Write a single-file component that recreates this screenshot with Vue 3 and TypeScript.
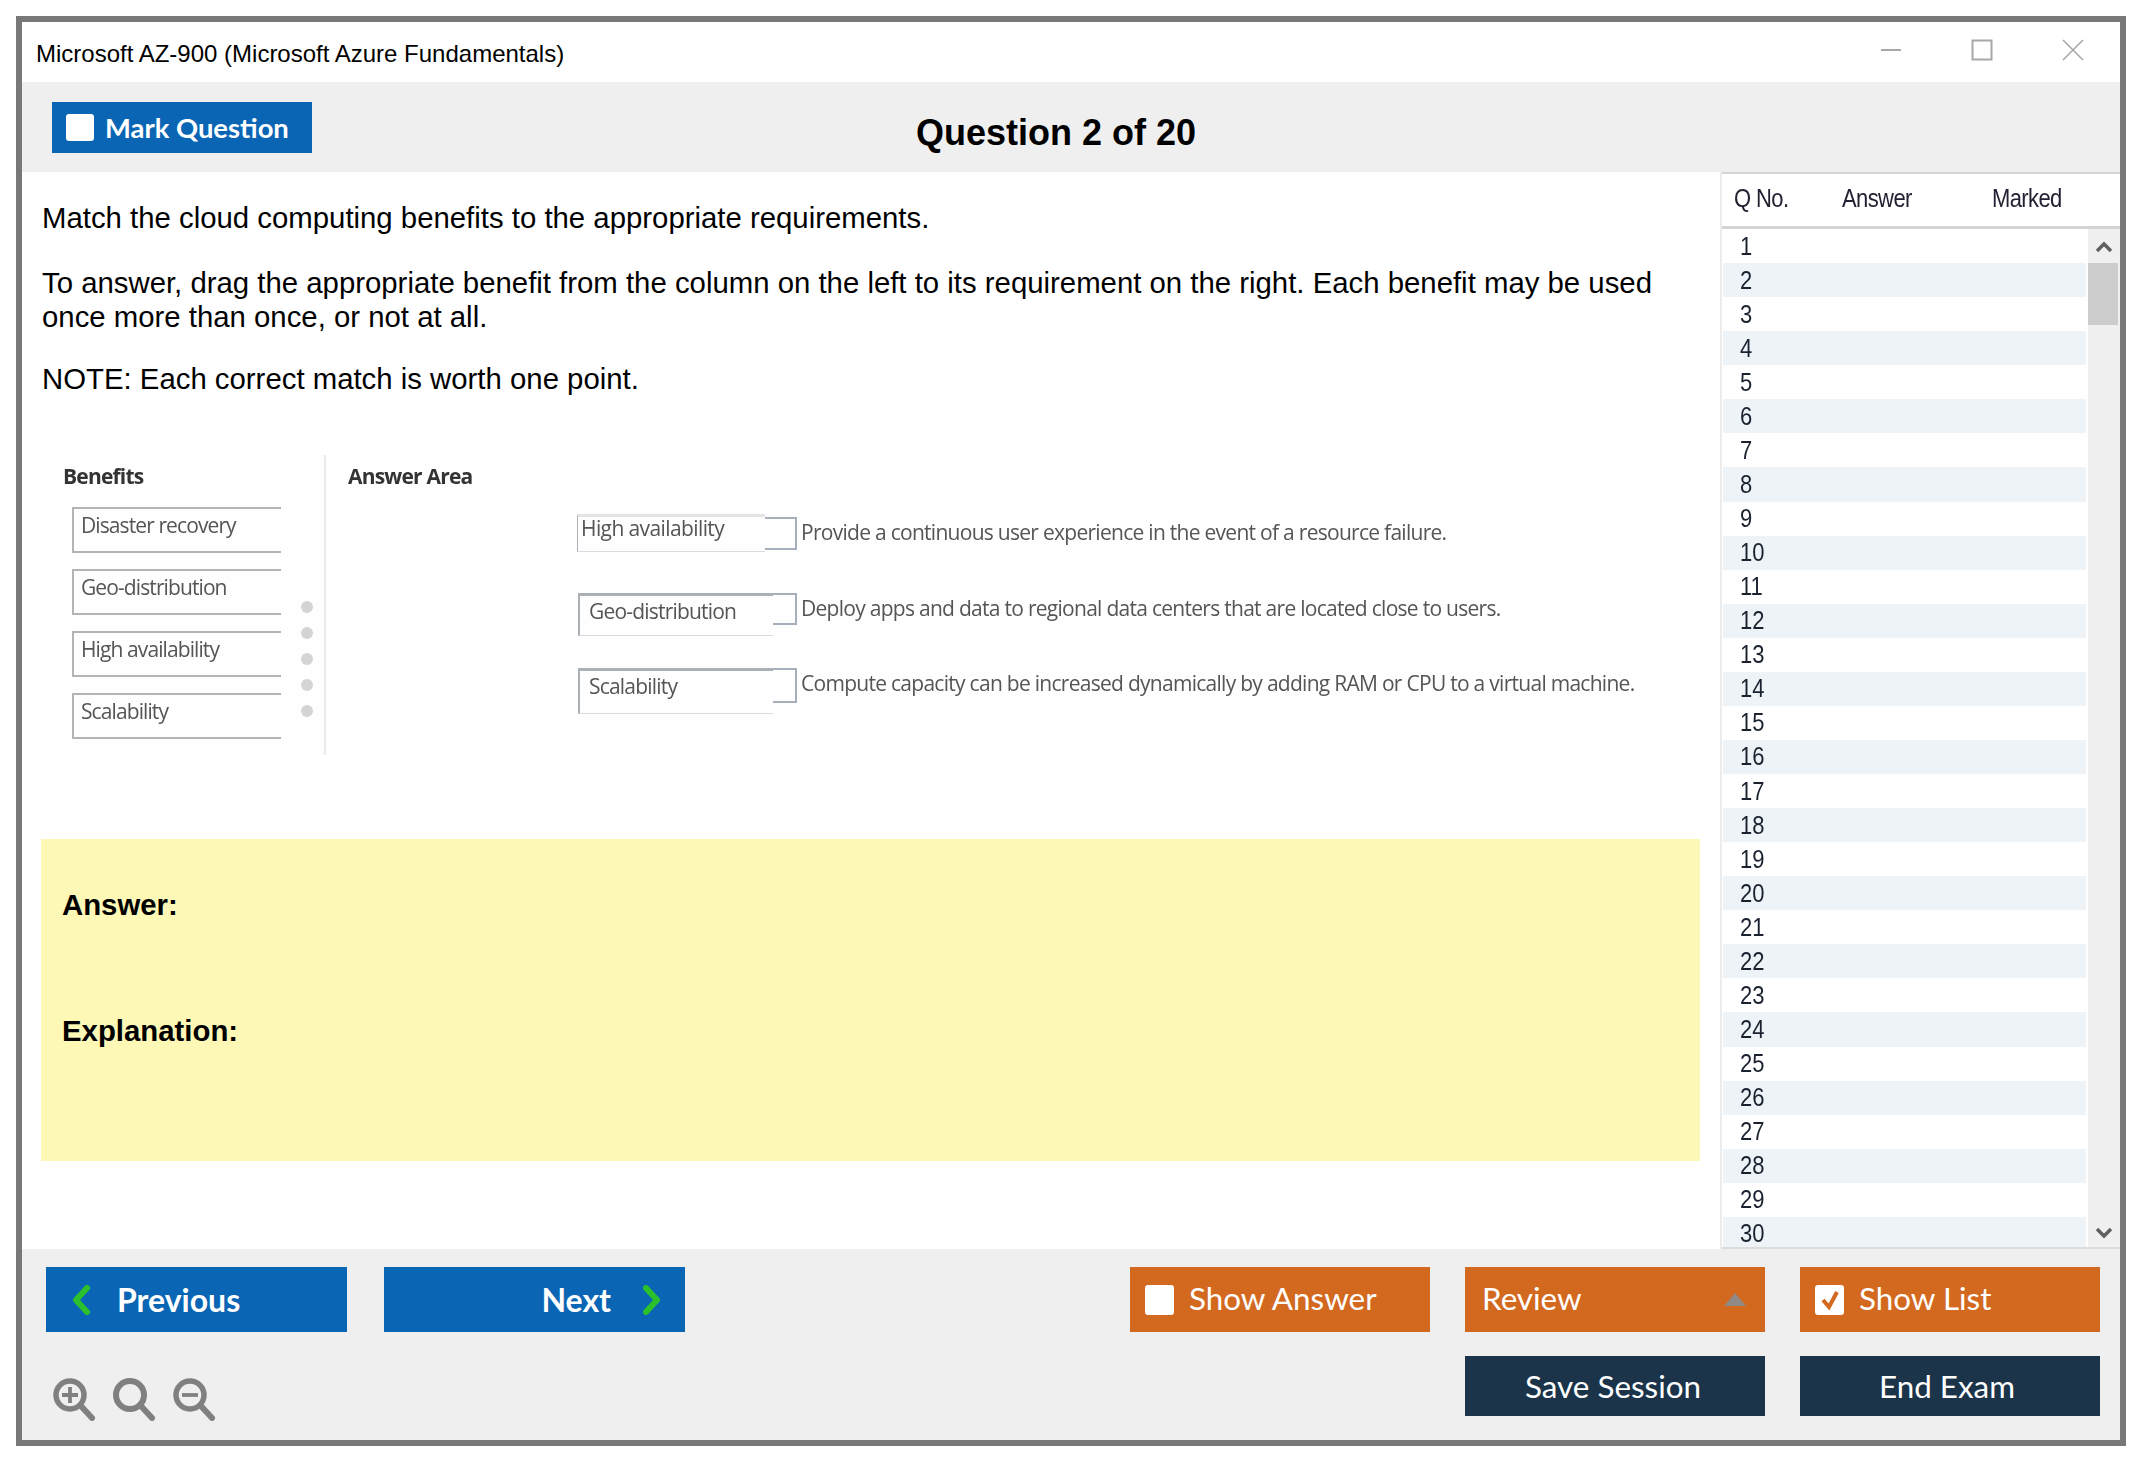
<script setup lang="ts">
const rows: number[] = Array.from({ length: 30 }, (_, i) => i + 1)
const benefits: string[] = ['Disaster recovery', 'Geo-distribution', 'High availability', 'Scalability']
const matches = [
  { cls: 'm1', label: 'High availability', text: 'Provide a continuous user experience in the event of a resource failure.' },
  { cls: 'm2', label: 'Geo-distribution', text: 'Deploy apps and data to regional data centers that are located close to users.' },
  { cls: 'm3', label: 'Scalability', text: 'Compute capacity can be increased dynamically by adding RAM or CPU to a virtual machine.' }
]
</script>

<template>
  <div class="page">
    <div class="frame">
      <div class="titlebar">
        <span class="apptitle">Microsoft AZ-900 (Microsoft Azure Fundamentals)</span>
        <div class="winctl">
          <svg width="22" height="22" viewBox="0 0 22 22"><path d="M1 11h20" stroke="#a8a8a8" stroke-width="2" /></svg>
          <svg width="22" height="22" viewBox="0 0 22 22"><rect x="1.5" y="1.5" width="19" height="19" fill="none" stroke="#a8a8a8" stroke-width="2" /></svg>
          <svg width="22" height="22" viewBox="0 0 22 22"><path d="M1 1l20 20M21 1L1 21" stroke="#a8a8a8" stroke-width="1.6" /></svg>
        </div>
      </div>

      <div class="header">
        <div class="btn blue mark"><span class="check small"></span><span>Mark Question</span></div>
        <div class="qtitle">Question 2 of 20</div>
      </div>

      <div class="body">
        <main class="main">
          <p class="p1">Match the cloud computing benefits to the appropriate requirements.</p>
          <p class="p2">To answer, drag the appropriate benefit from the column on the left to its requirement on the right. Each benefit may be used once more than once, or not at all.</p>
          <p class="p3">NOTE: Each correct match is worth one point.</p>

          <div class="diagram">
            <div class="benefits">
              <div class="dhead">Benefits</div>
              <div v-for="b in benefits" :key="b" class="bbox">{{ b }}</div>
              <div class="dots"><i></i><i></i><i></i><i></i><i></i></div>
            </div>
            <div class="answers">
              <div class="dhead">Answer Area</div>
              <div class="mlist">
                <div v-for="m in matches" :key="m.cls" class="mrow" :class="m.cls">
                  <div class="mbox">{{ m.label }}</div>
                  <div class="bracket"></div>
                  <div class="mtext">{{ m.text }}</div>
                </div>
              </div>
            </div>
          </div>

          <div class="answerbox">
            <div class="a1">Answer:</div>
            <div class="a2">Explanation:</div>
          </div>
        </main>

        <aside class="side">
          <div class="shead">
            <span class="c1">Q No.</span><span class="c2">Answer</span><span class="c3">Marked</span>
          </div>
          <div class="slist">
            <div class="rows">
              <div v-for="n in rows" :key="n" class="row"><span>{{ n }}</span></div>
            </div>
            <div class="scroll">
              <svg class="sup" width="18" height="12" viewBox="0 0 18 12"><path d="M2 10l7-7 7 7" fill="none" stroke="#606060" stroke-width="3.4" /></svg>
              <div class="thumb"></div>
              <svg class="sdown" width="18" height="12" viewBox="0 0 18 12"><path d="M2 2l7 7 7-7" fill="none" stroke="#606060" stroke-width="3.4" /></svg>
            </div>
          </div>
        </aside>
      </div>

      <div class="footer">
        <div class="fleft">
          <div class="nav">
            <div class="btn blue navbtn prev">
              <svg width="20" height="30" viewBox="0 0 20 30"><path d="M16 3L5 15l11 12" fill="none" stroke="#2cc02c" stroke-width="6" stroke-linejoin="round" stroke-linecap="round" /></svg>
              <span>Previous</span>
            </div>
            <div class="btn blue navbtn next">
              <span>Next</span>
              <svg width="20" height="30" viewBox="0 0 20 30"><path d="M4 3l11 12L4 27" fill="none" stroke="#2cc02c" stroke-width="6" stroke-linejoin="round" stroke-linecap="round" /></svg>
            </div>
          </div>
          <div class="zooms">
            <svg width="44" height="44" viewBox="0 0 44 44"><circle cx="18" cy="18" r="14" fill="none" stroke="#808080" stroke-width="5.5" /><path d="M29 29l11 12" stroke="#808080" stroke-width="6" stroke-linecap="round" /><path d="M10 18h16M18 10v16" stroke="#808080" stroke-width="3.8" /></svg>
            <svg width="44" height="44" viewBox="0 0 44 44"><circle cx="18" cy="18" r="14" fill="none" stroke="#808080" stroke-width="6" /><path d="M29 29l11 12" stroke="#808080" stroke-width="6" stroke-linecap="round" /></svg>
            <svg width="44" height="44" viewBox="0 0 44 44"><circle cx="18" cy="18" r="14" fill="none" stroke="#808080" stroke-width="5.5" /><path d="M10 18h16" stroke="#808080" stroke-width="3.8" /><path d="M29 29l11 12" stroke="#808080" stroke-width="6" stroke-linecap="round" /></svg>
          </div>
        </div>
        <div class="fright">
          <div class="btn orange"><span class="check"></span><span class="otext">Show Answer</span></div>
          <div class="btn orange review"><span class="otext">Review</span><i class="tri"></i></div>
          <div class="btn orange">
            <span class="check">
              <svg width="20" height="22" viewBox="0 0 20 22"><path d="M3 11l6 7 8-15" fill="none" stroke="#d3691f" stroke-width="4" /></svg>
            </span>
            <span class="otext">Show List</span>
          </div>
          <div class="btn navy save">Save Session</div>
          <div class="btn navy end">End Exam</div>
        </div>
      </div>
    </div>
  </div>
</template>

<style scoped>
.page {
  width: 2150px;
  height: 1470px;
  box-sizing: border-box;
  padding: 16px 0 0 16px;
  background: #fff;
  font-family: "Liberation Sans", Arial, sans-serif;
  color: #000;
  overflow: hidden;
}
.frame {
  width: 2110px;
  height: 1430px;
  box-sizing: border-box;
  border: 6px solid #787878;
  display: flex;
  flex-direction: column;
  background: #fff;
}
.titlebar {
  height: 60px;
  flex: none;
  display: flex;
  align-items: center;
  justify-content: space-between;
  padding-left: 14px;
  padding-right: 36px;
}
.apptitle { font-size: 24px; margin-top: 3px; }
.winctl { display: flex; gap: 69px; margin-top: -5px; }
.header {
  height: 90px;
  flex: none;
  background: #efefef;
  display: flex;
  align-items: center;
  padding-left: 30px;
}
.btn {
  display: flex;
  align-items: center;
  justify-content: center;
  box-sizing: border-box;
  color: #fff;
  font-family: Lato, "Open Sans", sans-serif;
}
.blue { background: #0a66b4; }
.orange { background: #d3691f; }
.navy { background: #1b3449; }
.mark {
  width: 260px;
  height: 51px;
  justify-content: flex-start;
  padding-left: 14px;
  gap: 11px;
  font-size: 27.4px;
  font-weight: 700;
}
.check {
  width: 29px;
  height: 30px;
  background: #fff;
  border-radius: 3px;
  flex: none;
  display: flex;
  align-items: center;
  justify-content: center;
}
.check.small { width: 28px; height: 27px; }
.qtitle {
  flex: 1;
  text-align: center;
  padding-right: 320px;
  font-size: 36px;
  font-weight: 700;
  margin-top: 12px;
}
.body {
  flex: 1;
  min-height: 0;
  display: flex;
}
.main {
  width: 1698px;
  flex: none;
  box-sizing: border-box;
  padding: 29px 0 0 19px;
}
.main p {
  margin: 0 0 0 1px;
  font-size: 29.35px;
  line-height: 34px;
  width: 1650px;
}
.main .p2 { margin-top: 31px; }
.main .p3 { margin-top: 28px; }
.diagram {
  margin-top: 59px;
  margin-left: 9px;
  width: 1600px;
  height: 300px;
  background: #fefefe;
  display: flex;
  filter: blur(0.6px);
  font-family: "Open Sans", sans-serif;
  color: #555;
}
.dhead {
  font-weight: 700;
  font-size: 21px;
  letter-spacing: -0.8px;
  color: #333;
  height: 46px;
  padding-top: 7px;
  box-sizing: border-box;
}
.benefits {
  width: 276px;
  box-sizing: border-box;
  padding: 0 0 0 13px;
  border-right: 2px solid #eaeaea;
  position: relative;
}
.bbox {
  margin-left: 9px;
  margin-top: 6px;
  margin-bottom: 17px;
  width: 209px;
  height: 46px;
  box-sizing: border-box;
  border: 2px solid #b4b4b4;
  border-right: none;
  padding: 3px 0 0 7px;
  font-size: 21px;
  letter-spacing: -0.9px;
  line-height: 26px;
}
.bbox + .bbox { margin-top: -1px; }
.dots {
  position: absolute;
  left: 251px;
  top: 146px;
  display: flex;
  flex-direction: column;
  gap: 14px;
}
.dots i {
  display: block;
  width: 12px;
  height: 12px;
  border-radius: 50%;
  background: #d4d4d4;
}
.answers {
  flex: 1;
  padding-left: 22px;
  position: relative;
}
.mlist { position: relative; }
.mrow {
  display: flex;
  align-items: flex-start;
  margin-left: 230px;
  position: relative;
}
.mbox {
  box-sizing: border-box;
  font-size: 21px;
  letter-spacing: -0.8px;
  width: 195px;
  height: 43px;
  border: 1px solid #d8dde2;
  border-right: none;
  padding-left: 9px;
  line-height: 30px;
  border-top: 3px solid #aab0b6;
  border-left: 2px solid #aab0b6;
}
.bracket {
  width: 24px;
  height: 32px;
  box-sizing: border-box;
  border: 2px solid #a5b0bc;
  border-left: none;
}
.mtext {
  font-size: 21px;
  letter-spacing: -0.72px;
  margin-left: 4px;
  white-space: nowrap;
  line-height: 30px;
}
.m1 { margin-top: 13px; margin-left: 229px; }
.m1 .mbox { width: 188px; height: 38px; border-top-color: #e4e4e4; border-left-width: 1px; padding-left: 3px; line-height: 22px; letter-spacing: -0.6px; }
.m1 .bracket { width: 32px; height: 33px; margin-top: 3px; }
.m1 .mtext { margin-top: 3px; }
.m2 { margin-top: 41px; }
.m3 { margin-top: 32px; }
.m3 .mbox { height: 46px; }
.m3 .bracket { height: 35px; }
.answerbox {
  margin-top: 84px;
  width: 1659px;
  height: 322px;
  background: #fef8b6;
  box-sizing: border-box;
  padding: 49px 0 0 21px;
  font-size: 29.35px;
  font-weight: 700;
  line-height: 34px;
}
.a2 { margin-top: 92px; }
.side {
  flex: 1;
  min-width: 0;
  display: flex;
  flex-direction: column;
  border-left: 2px solid #ececec;
}
.shead {
  height: 57px;
  flex: none;
  box-sizing: border-box;
  border-top: 2px solid #d4d4d4;
  border-bottom: 3px solid #d4d4d4;
  display: flex;
  align-items: center;
  font-size: 22px;
  color: #223;
  padding: 0 0 2px 12px;
}
.shead span { display: inline-block; transform: scaleY(1.2); letter-spacing: -0.6px; }
.c1 { width: 108px; }
.c2 { width: 150px; }
.slist {
  flex: 1;
  min-height: 0;
  display: flex;
  border-bottom: 2px solid #dcdcdc;
}
.rows {
  width: 364px;
  box-sizing: border-box;
  flex: none;
  overflow: hidden;
  padding-left: 1px;
}
.row {
  height: 34.07px;
  box-sizing: border-box;
  padding: 1px 0 0 17px;
  display: flex;
  align-items: center;
  font-size: 22px;
  color: #1a2230;
}
.row span { display: inline-block; transform: scaleY(1.2); }
.row:nth-child(even) { background: #eef3f8; }
.scroll {
  flex: 1;
  background: #f0f0f0;
  margin-left: 2px;
  display: flex;
  flex-direction: column;
  align-items: center;
}
.sup { margin-top: 12px; }
.thumb {
  width: 30px;
  height: 62px;
  background: #cdcdcd;
  margin-top: 10px;
  margin-right: 2px;
}
.sdown { margin-top: auto; margin-bottom: 8px; }
.footer {
  height: 191px;
  flex: none;
  background: #efefef;
  display: flex;
  justify-content: space-between;
  box-sizing: border-box;
  padding: 18px 20px 0 24px;
}
.nav { display: flex; gap: 37px; }
.navbtn {
  width: 301px;
  height: 65px;
  font-size: 32px;
  font-weight: 700;
}
.prev { justify-content: flex-start; padding-left: 25px; gap: 26px; }
.next { justify-content: flex-end; padding-right: 23px; gap: 31px; }
.zooms {
  display: flex;
  gap: 16px;
  margin-top: 45px;
  margin-left: 6px;
}
.fright {
  display: grid;
  grid-template-columns: repeat(3, 300px);
  grid-template-rows: 65px 60px;
  gap: 24px 35px;
  font-size: 31.4px;
}
.fright .btn { gap: 15px; justify-content: flex-start; padding-left: 15px; }
.otext { margin-top: -3px; }
.fright .navy { justify-content: center; padding: 0 4px 0 0; }
.fright .end { padding-right: 6px; }
.save { grid-column: 2; }
.fright .review { justify-content: space-between; padding: 0 19px 0 17px; }
.tri {
  width: 0;
  height: 0;
  border-left: 11px solid transparent;
  border-right: 11px solid transparent;
  border-bottom: 13px solid #8f8a85;
}
</style>

<style>
html, body { margin: 0; padding: 0; background: #fff; }
</style>
